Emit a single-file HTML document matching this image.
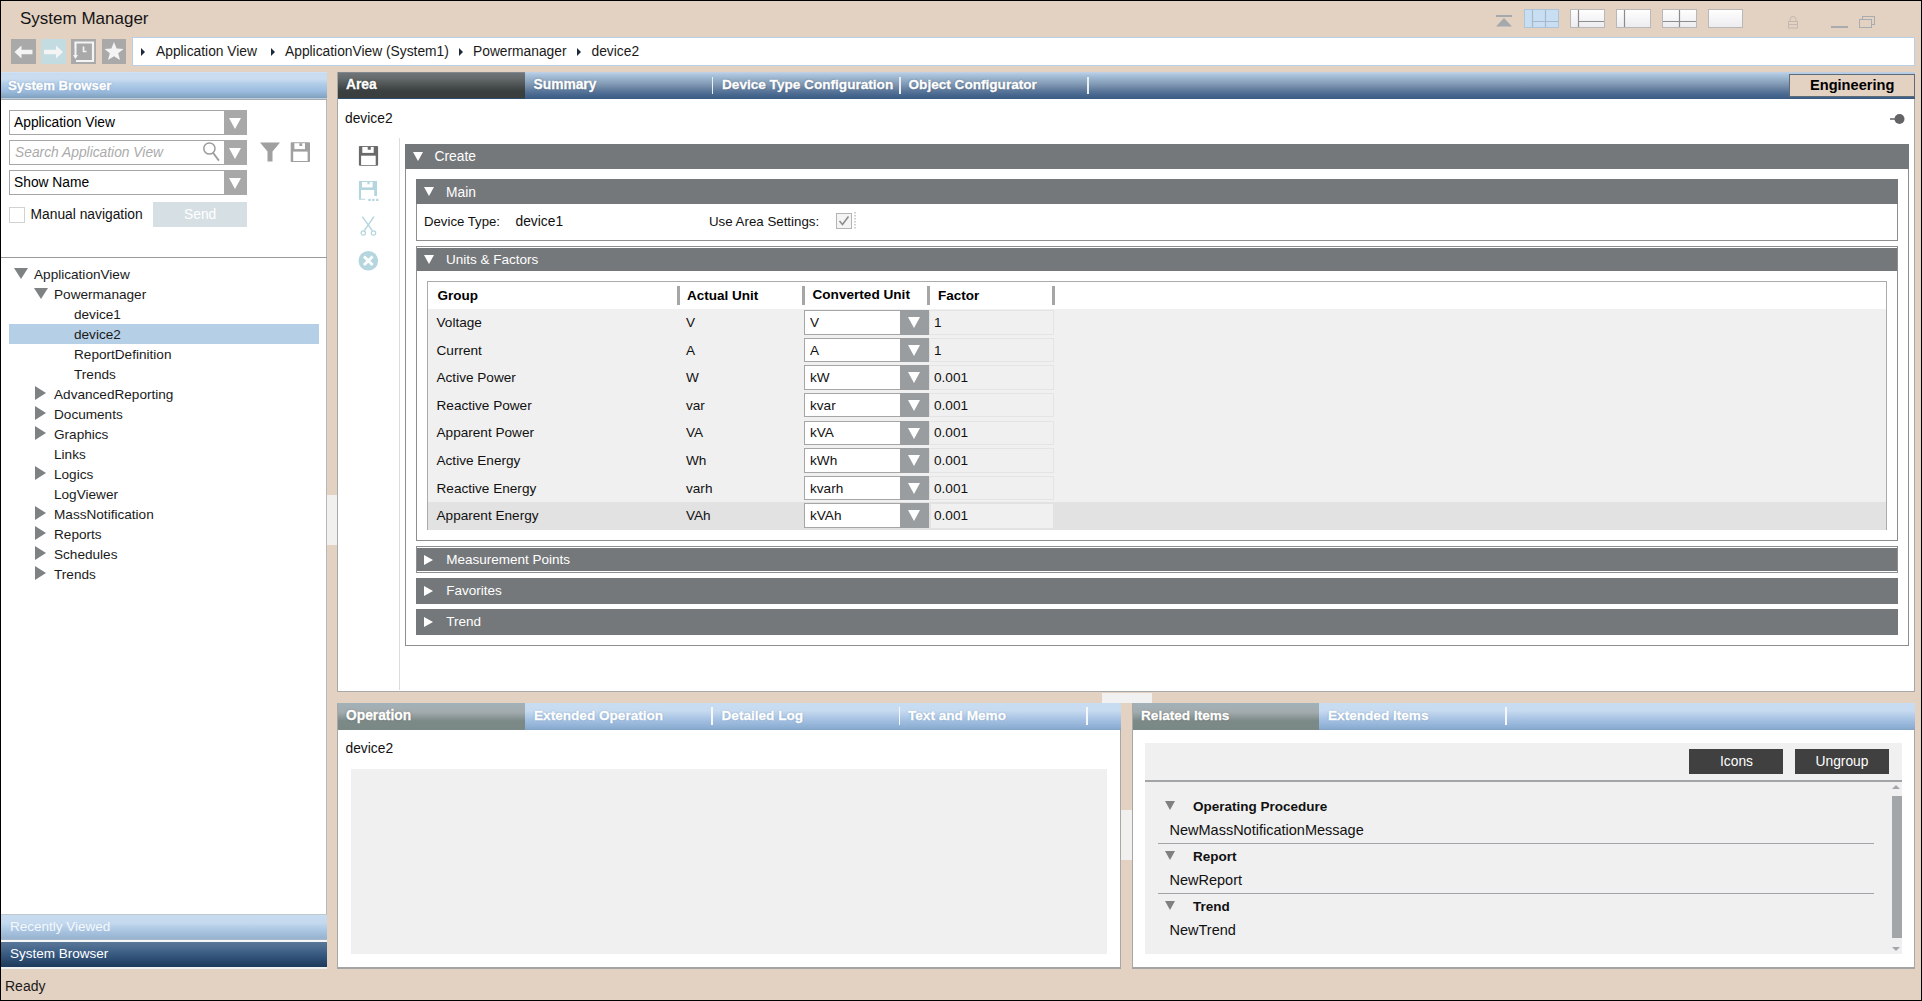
<!DOCTYPE html>
<html><head><meta charset="utf-8">
<style>
*{box-sizing:border-box;margin:0;padding:0}
html,body{width:1922px;height:1001px;overflow:hidden}
body{position:relative;background:#E3D1C2;font-family:"Liberation Sans",sans-serif;font-size:13.5px;color:#000}
.a{position:absolute}
.t{position:absolute;white-space:nowrap;line-height:1}
.sh{text-shadow:0 0 1px rgba(0,0,0,.35)}
.bw{-webkit-text-stroke:0.35px #fff}
</style></head><body>
<div class="a" style="left:0px;top:0px;width:1922px;height:1px;background:#000"></div>
<div class="a" style="left:0px;top:1000px;width:1922px;height:1px;background:#000"></div>
<div class="a" style="left:0px;top:0px;width:1px;height:1001px;background:#000"></div>
<div class="a" style="left:1921px;top:0px;width:1px;height:1001px;background:#000"></div>
<div class="t" style="left:20px;top:9.61px;font-size:17px;color:#151515;">System Manager</div>
<div class="a" style="left:11px;top:39px;width:25px;height:25px;background:#A9A9A9"></div>
<div class="a" style="left:41px;top:39px;width:25px;height:25px;background:#C2DCE2"></div>
<div class="a" style="left:71px;top:39px;width:25px;height:25px;background:#A9A9A9"></div>
<div class="a" style="left:102px;top:39px;width:24px;height:25px;background:#A9A9A9"></div>
<svg class="a" style="left:11px;top:39px" width="25" height="25" viewBox="0 0 25 25"><path d="M3.5 13 L10.5 6.5 L10.5 10.7 L21.5 10.7 L21.5 15.3 L10.5 15.3 L10.5 19.5 Z" fill="#F4F4F4"/></svg>
<svg class="a" style="left:41px;top:39px" width="25" height="25" viewBox="0 0 25 25"><path d="M22 13 L15 6.5 L15 10.7 L3 10.7 L3 15.3 L15 15.3 L15 19.5 Z" fill="#F4F4F4"/></svg>
<svg class="a" style="left:71px;top:39px" width="25" height="25" viewBox="0 0 25 25"><path d="M4.5 9 V3.5 H22 V22 H5" fill="none" stroke="#F4F4F4" stroke-width="2.2"/><path d="M2 16 L7 16 L4.5 20 Z" fill="#F4F4F4"/><path d="M4.5 9 V17" stroke="#F4F4F4" stroke-width="2"/><path d="M12.5 7.5 V12.5 H15.5" fill="none" stroke="#F4F4F4" stroke-width="1.6"/></svg>
<svg class="a" style="left:102px;top:39px" width="24" height="25" viewBox="0 0 24 25"><path d="M12 3 L14.6 9.6 L21.5 9.9 L16.2 14.3 L18 21 L12 17.2 L6 21 L7.8 14.3 L2.5 9.9 L9.4 9.6 Z" fill="#F4F4F4"/></svg>
<div class="a" style="left:132px;top:37px;width:1783px;height:28.5px;background:#fff;border:1px solid #B9CFE6"></div>
<div class="a" style="left:141px;top:47.5px;width:0;height:0;border-top:4.0px solid transparent;border-bottom:4.0px solid transparent;border-left:4.5px solid #1E2A3A"></div>
<div class="a" style="left:271px;top:47.5px;width:0;height:0;border-top:4.0px solid transparent;border-bottom:4.0px solid transparent;border-left:4.5px solid #1E2A3A"></div>
<div class="a" style="left:458.5px;top:47.5px;width:0;height:0;border-top:4.0px solid transparent;border-bottom:4.0px solid transparent;border-left:4.5px solid #1E2A3A"></div>
<div class="a" style="left:576.5px;top:47.5px;width:0;height:0;border-top:4.0px solid transparent;border-bottom:4.0px solid transparent;border-left:4.5px solid #1E2A3A"></div>
<div class="t" style="left:156px;top:44.82px;font-size:13.8px;color:#1A1A1A;">Application View</div>
<div class="t" style="left:285px;top:44.82px;font-size:13.8px;color:#1A1A1A;">ApplicationView (System1)</div>
<div class="t" style="left:473px;top:44.82px;font-size:13.8px;color:#1A1A1A;">Powermanager</div>
<div class="t" style="left:591.5px;top:44.82px;font-size:13.8px;color:#1A1A1A;">device2</div>
<svg class="a" style="left:1495px;top:14px" width="18" height="14" viewBox="0 0 18 14"><rect x="1" y="1" width="16" height="2" fill="#A4A9AD"/><path d="M9 4 L17 12.5 L1 12.5 Z" fill="#A4A9AD"/></svg>
<svg class="a" style="left:1523.5px;top:9px" width="35" height="19" viewBox="0 0 35 19"><defs><linearGradient id="g1523" x1="0" y1="0" x2="0" y2="1"><stop offset="0" stop-color="#FFFFFF"/><stop offset="1" stop-color="#ECECF0"/></linearGradient></defs><rect x="0.5" y="0.5" width="34" height="18" fill="#C8DEF2" stroke="#B0C4D8"/><path d="M8.5 1 V18 M21.5 1 V18 M8.5 12.5 H34" stroke="#A8B8C8" stroke-width="1.2"/></svg>
<svg class="a" style="left:1569.5px;top:9px" width="35" height="19" viewBox="0 0 35 19"><defs><linearGradient id="g1569" x1="0" y1="0" x2="0" y2="1"><stop offset="0" stop-color="#FFFFFF"/><stop offset="1" stop-color="#ECECF0"/></linearGradient></defs><rect x="0.5" y="0.5" width="34" height="18" fill="url(#g1569)" stroke="#B8B8B8"/><path d="M8.5 1 V18 M8.5 12.5 H34" stroke="#8C8C8C" stroke-width="1.2"/></svg>
<svg class="a" style="left:1615.5px;top:9px" width="35" height="19" viewBox="0 0 35 19"><defs><linearGradient id="g1615" x1="0" y1="0" x2="0" y2="1"><stop offset="0" stop-color="#FFFFFF"/><stop offset="1" stop-color="#ECECF0"/></linearGradient></defs><rect x="0.5" y="0.5" width="34" height="18" fill="url(#g1615)" stroke="#B8B8B8"/><path d="M8.5 1 V18" stroke="#8C8C8C" stroke-width="1.2"/></svg>
<svg class="a" style="left:1661.5px;top:9px" width="35" height="19" viewBox="0 0 35 19"><defs><linearGradient id="g1661" x1="0" y1="0" x2="0" y2="1"><stop offset="0" stop-color="#FFFFFF"/><stop offset="1" stop-color="#ECECF0"/></linearGradient></defs><rect x="0.5" y="0.5" width="34" height="18" fill="url(#g1661)" stroke="#B8B8B8"/><path d="M17.5 1 V18 M1 12.5 H34" stroke="#8C8C8C" stroke-width="1.2"/></svg>
<svg class="a" style="left:1707.5px;top:9px" width="35" height="19" viewBox="0 0 35 19"><defs><linearGradient id="g1707" x1="0" y1="0" x2="0" y2="1"><stop offset="0" stop-color="#FFFFFF"/><stop offset="1" stop-color="#ECECF0"/></linearGradient></defs><rect x="0.5" y="0.5" width="34" height="18" fill="url(#g1707)" stroke="#B8B8B8"/></svg>
<svg class="a" style="left:1787px;top:15px" width="12" height="14" viewBox="0 0 12 14"><path d="M3 6.5 V4.5 A3 3 0 0 1 9 4.5 V6.5" fill="none" stroke="#C4B8B0" stroke-width="1"/><rect x="1.5" y="6.5" width="9" height="6.5" fill="none" stroke="#C4B8B0" stroke-width="1"/><path d="M1.5 9.5 H10.5" stroke="#C4B8B0"/></svg>
<div class="a" style="left:1831px;top:26px;width:17px;height:1.5px;background:#A9ACAE"></div>
<svg class="a" style="left:1858px;top:15px" width="18" height="14" viewBox="0 0 18 14"><rect x="4.5" y="1.5" width="12" height="8" fill="none" stroke="#A9ACAE"/><rect x="1.5" y="4.5" width="12" height="8" fill="#E3D1C2" stroke="#A9ACAE"/></svg>
<div class="a" style="left:1px;top:72px;width:326px;height:26px;background:linear-gradient(#D8E6F4 0px,#C8DCF1 1px,#CADDF0 7px,#B0CCE8 12px,#9CBCE0 19px,#88A9C6 24px,#7F9EBD 26px)"></div>
<div class="a" style="left:1px;top:98px;width:326px;height:1px;background:#BFCDE0"></div>
<div class="a" style="left:1px;top:99px;width:326px;height:1px;background:#A4ACAE"></div>
<div class="t" style="left:8px;top:78.83px;font-size:13.2px;font-weight:bold;color:#FFFFFF;-webkit-text-stroke:0.35px #fff;text-shadow:0 0 1.5px #5A7FA8">System Browser</div>
<div class="a" style="left:1px;top:100px;width:326px;height:815px;background:#fff;border-right:1px solid #B8B8B8"></div>
<div class="a" style="left:9px;top:110px;width:238px;height:25px;background:#fff;border:1px solid #A6A6A6"></div>
<div class="a" style="left:224px;top:110px;width:23px;height:25px;background:#A8A8A8"></div>
<div class="a" style="left:228.8px;top:118.2px;width:0;height:0;border-left:6.1px solid transparent;border-right:6.1px solid transparent;border-top:11px solid #FFFFFF"></div>
<div class="t" style="left:14px;top:115.82px;font-size:13.8px;color:#000;">Application View</div>
<div class="a" style="left:9px;top:140px;width:238px;height:25px;background:#fff;border:1px solid #A6A6A6"></div>
<div class="a" style="left:224px;top:140px;width:23px;height:25px;background:#A8A8A8"></div>
<div class="a" style="left:228.8px;top:148.2px;width:0;height:0;border-left:6.1px solid transparent;border-right:6.1px solid transparent;border-top:11px solid #FFFFFF"></div>
<div class="t" style="left:15px;top:145.82px;font-size:13.8px;color:#ABABAB;font-style:italic;">Search Application View</div>
<svg class="a" style="left:200px;top:141px" width="22" height="22" viewBox="0 0 22 22"><circle cx="9.4" cy="7.5" r="5.6" fill="none" stroke="#9C9C9C" stroke-width="1.5"/><path d="M13 11.8 L18.9 19.6" stroke="#9C9C9C" stroke-width="1.8"/></svg>
<div class="a" style="left:9px;top:170px;width:238px;height:25px;background:#fff;border:1px solid #A6A6A6"></div>
<div class="a" style="left:224px;top:170px;width:23px;height:25px;background:#A8A8A8"></div>
<div class="a" style="left:228.8px;top:178.2px;width:0;height:0;border-left:6.1px solid transparent;border-right:6.1px solid transparent;border-top:11px solid #FFFFFF"></div>
<div class="t" style="left:14px;top:175.82px;font-size:13.8px;color:#000;">Show Name</div>
<svg class="a" style="left:259px;top:141px" width="22" height="22" viewBox="0 0 22 22"><path d="M1 1.5 H21 L13.5 10.5 V20.5 H8.5 V10.5 Z" fill="#A0A0A0"/></svg>
<svg class="a" style="left:289px;top:141px" width="22" height="22" viewBox="0 0 22 22"><rect x="1.7" y="1.2" width="19.3" height="19.8" rx="0.8" fill="#A0A0A0"/><rect x="5.4" y="2.2" width="10.6" height="5.9" fill="#fff"/><rect x="10.4" y="2.2" width="2.8" height="2.8" fill="#A0A0A0"/><rect x="4.2" y="10.6" width="14.4" height="9.4" fill="#fff"/></svg>
<div class="a" style="left:9px;top:207px;width:16px;height:15.5px;background:#fff;border:1px solid #D2D2D2"></div>
<div class="t" style="left:30.6px;top:208.32px;font-size:13.8px;color:#111;">Manual navigation</div>
<div class="a" style="left:153px;top:202px;width:94px;height:25px;background:#D6E0E4"></div>
<div class="t" style="left:184px;top:208.32px;font-size:13.8px;color:#FFFFFF;">Send</div>
<div class="a" style="left:1px;top:257px;width:326px;height:1px;background:#9A9A9A"></div>
<div class="a" style="left:13.7px;top:268px;width:0;height:0;border-left:7.0px solid transparent;border-right:7.0px solid transparent;border-top:11.5px solid #7F8283"></div>
<div class="t" style="left:34px;top:268.49px;font-size:13.6px;color:#1A1A1A;">ApplicationView</div>
<div class="a" style="left:33.7px;top:288px;width:0;height:0;border-left:7.0px solid transparent;border-right:7.0px solid transparent;border-top:11.5px solid #7F8283"></div>
<div class="t" style="left:54px;top:288.49px;font-size:13.6px;color:#1A1A1A;">Powermanager</div>
<div class="t" style="left:74px;top:308.49px;font-size:13.6px;color:#1A1A1A;">device1</div>
<div class="a" style="left:9px;top:324px;width:310px;height:20px;background:#B5D0E6"></div>
<div class="t" style="left:74px;top:328.49px;font-size:13.6px;color:#1A1A1A;">device2</div>
<div class="t" style="left:74px;top:348.49px;font-size:13.6px;color:#1A1A1A;">ReportDefinition</div>
<div class="t" style="left:74px;top:368.49px;font-size:13.6px;color:#1A1A1A;">Trends</div>
<div class="a" style="left:35px;top:385.5px;width:0;height:0;border-top:7.0px solid transparent;border-bottom:7.0px solid transparent;border-left:11.5px solid #7F8283"></div>
<div class="t" style="left:54px;top:388.49px;font-size:13.6px;color:#1A1A1A;">AdvancedReporting</div>
<div class="a" style="left:35px;top:405.5px;width:0;height:0;border-top:7.0px solid transparent;border-bottom:7.0px solid transparent;border-left:11.5px solid #7F8283"></div>
<div class="t" style="left:54px;top:408.49px;font-size:13.6px;color:#1A1A1A;">Documents</div>
<div class="a" style="left:35px;top:425.5px;width:0;height:0;border-top:7.0px solid transparent;border-bottom:7.0px solid transparent;border-left:11.5px solid #7F8283"></div>
<div class="t" style="left:54px;top:428.49px;font-size:13.6px;color:#1A1A1A;">Graphics</div>
<div class="t" style="left:54px;top:448.49px;font-size:13.6px;color:#1A1A1A;">Links</div>
<div class="a" style="left:35px;top:465.5px;width:0;height:0;border-top:7.0px solid transparent;border-bottom:7.0px solid transparent;border-left:11.5px solid #7F8283"></div>
<div class="t" style="left:54px;top:468.49px;font-size:13.6px;color:#1A1A1A;">Logics</div>
<div class="t" style="left:54px;top:488.49px;font-size:13.6px;color:#1A1A1A;">LogViewer</div>
<div class="a" style="left:35px;top:505.5px;width:0;height:0;border-top:7.0px solid transparent;border-bottom:7.0px solid transparent;border-left:11.5px solid #7F8283"></div>
<div class="t" style="left:54px;top:508.49px;font-size:13.6px;color:#1A1A1A;">MassNotification</div>
<div class="a" style="left:35px;top:525.5px;width:0;height:0;border-top:7.0px solid transparent;border-bottom:7.0px solid transparent;border-left:11.5px solid #7F8283"></div>
<div class="t" style="left:54px;top:528.49px;font-size:13.6px;color:#1A1A1A;">Reports</div>
<div class="a" style="left:35px;top:545.5px;width:0;height:0;border-top:7.0px solid transparent;border-bottom:7.0px solid transparent;border-left:11.5px solid #7F8283"></div>
<div class="t" style="left:54px;top:548.49px;font-size:13.6px;color:#1A1A1A;">Schedules</div>
<div class="a" style="left:35px;top:565.5px;width:0;height:0;border-top:7.0px solid transparent;border-bottom:7.0px solid transparent;border-left:11.5px solid #7F8283"></div>
<div class="t" style="left:54px;top:568.49px;font-size:13.6px;color:#1A1A1A;">Trends</div>
<div class="a" style="left:327px;top:495px;width:10px;height:50px;background:#F2F0EE"></div>
<div class="a" style="left:1px;top:914.4px;width:326px;height:1px;background:#C0C8D0"></div>
<div class="a" style="left:1px;top:915.4px;width:326px;height:24px;background:linear-gradient(#C8DCF0 0px,#C4D9EE 8px,#A8C4E0 16px,#98B4D0 23px)"></div>
<div class="a" style="left:1px;top:939px;width:326px;height:1px;background:#A8B8C8"></div>
<div class="t" style="left:10px;top:919.57px;font-size:13.5px;color:#F4F8FC;">Recently Viewed</div>
<div class="a" style="left:1px;top:940px;width:326px;height:2px;background:#F4F6F8"></div>
<div class="a" style="left:1px;top:942px;width:326px;height:24.5px;background:linear-gradient(#5A7898 0px,#4A6A8E 6px,#34557C 14px,#203C5C 24px)"></div>
<div class="t" style="left:10px;top:946.57px;font-size:13.5px;color:#FFFFFF;">System Browser</div>
<div class="a" style="left:1px;top:966.5px;width:326px;height:2px;background:#EEF0F2"></div>
<div class="t" style="left:5px;top:979.15px;font-size:14px;color:#1A1A1A;">Ready</div>
<div class="a" style="left:337px;top:72px;width:578px;height:0px;"></div>
<div class="a" style="left:337px;top:72px;width:1578px;height:620px;background:#fff;border:1px solid #A8A8A8;border-top:none"></div>
<div class="a" style="left:338px;top:72px;width:1577px;height:27px;background:linear-gradient(#C2D2E6 0px,#AAC2DC 3px,#94ADC6 8px,#7890AC 14px,#5A769A 19px,#42638B 24px,#3F5F86 26px,#355880 27px)"></div>
<div class="a" style="left:338px;top:72px;width:186.5px;height:26px;background:linear-gradient(#8C9399 0px,#6E7477 1.5px,#666C6D 6px,#4A5050 14px,#3A3F3F 19px,#3C3D3D 26px)"></div>
<div class="a" style="left:338px;top:98px;width:186.5px;height:1px;background:#2F4D6E"></div>
<div class="t" style="left:346px;top:77.82px;font-size:13.8px;font-weight:bold;color:#FFFFFF;-webkit-text-stroke:0.35px #fff;text-shadow:0 0 1.5px #000">Area</div>
<div class="t" style="left:533.5px;top:77.82px;font-size:13.8px;font-weight:bold;color:#FFFFFF;-webkit-text-stroke:0.35px #fff;text-shadow:0 0 1.5px #2A4060">Summary</div>
<div class="t" style="left:722px;top:77.99px;font-size:13.6px;font-weight:bold;color:#FFFFFF;-webkit-text-stroke:0.35px #fff;text-shadow:0 0 1.5px #2A4060">Device Type Configuration</div>
<div class="t" style="left:908.5px;top:77.99px;font-size:13.6px;font-weight:bold;color:#FFFFFF;-webkit-text-stroke:0.35px #fff;text-shadow:0 0 1.5px #2A4060">Object Configurator</div>
<div class="a" style="left:711.5px;top:77px;width:1.5px;height:17px;background:#E8EEF4"></div>
<div class="a" style="left:899px;top:77px;width:1.5px;height:17px;background:#E8EEF4"></div>
<div class="a" style="left:1087px;top:77px;width:1.5px;height:17px;background:#E8EEF4"></div>
<div class="a" style="left:1789px;top:74px;width:126px;height:23px;background:#E3D1C2;border:1px solid #5E6B78"></div>
<div class="t" style="left:1810px;top:78.14px;font-size:14.6px;font-weight:bold;color:#000;">Engineering</div>
<div class="t" style="left:345px;top:112.32px;font-size:13.8px;color:#111;">device2</div>
<svg class="a" style="left:1888px;top:112px" width="20" height="14" viewBox="0 0 20 14"><path d="M2 7 H8" stroke="#555" stroke-width="1.4"/><circle cx="11.5" cy="7" r="5" fill="#626466"/></svg>
<div class="a" style="left:399px;top:138px;width:1px;height:552px;background:#DCDCDC"></div>
<svg class="a" style="left:357px;top:145px" width="22" height="22" viewBox="0 0 22 22"><rect x="1.9" y="0.9" width="19.2" height="19.9" rx="1" fill="#6A6A6A"/><rect x="5.3" y="1.9" width="11.4" height="6" fill="#fff"/><rect x="10.7" y="1.9" width="3.1" height="2.8" fill="#6A6A6A"/><rect x="4.1" y="10.7" width="14.6" height="9.3" fill="#fff"/></svg>
<svg class="a" style="left:357px;top:180px" width="24" height="24" viewBox="0 0 24 24"><path d="M1.9 1.1 H20 V16 H17.2 V9.9 H4 V18.8 H8.2 V19.8 H1.9 Z" fill="#B5D6DE"/><rect x="5" y="2" width="10.6" height="5.4" fill="#fff"/><rect x="10.4" y="2" width="2.3" height="2.3" fill="#B5D6DE"/><rect x="11.3" y="18.8" width="2.5" height="2.2" fill="#B5D6DE"/><rect x="15.2" y="18.8" width="2.3" height="2.2" fill="#B5D6DE"/><rect x="19.1" y="18.8" width="2.3" height="2.2" fill="#B5D6DE"/></svg>
<svg class="a" style="left:357px;top:215px" width="22" height="22" viewBox="0 0 22 22"><path d="M5.3 1.6 L15.3 15.6 M17 1.6 L7.3 15.6" stroke="#B5D6DE" stroke-width="1.5"/><circle cx="6.3" cy="18" r="2.2" fill="none" stroke="#B5D6DE" stroke-width="1.2"/><circle cx="16.5" cy="18" r="2.2" fill="none" stroke="#B5D6DE" stroke-width="1.2"/></svg>
<svg class="a" style="left:357px;top:250px" width="22" height="22" viewBox="0 0 22 22"><circle cx="11.3" cy="10.8" r="9.8" fill="#B5D6DE"/><path d="M7 6.5 L15.6 15.1 M15.6 6.5 L7 15.1" stroke="#fff" stroke-width="2.8"/></svg>
<div class="a" style="left:405px;top:168px;width:1504px;height:478px;border:1px solid #8E8E8E;border-top:none;background:#fff"></div>
<div class="a" style="left:405px;top:144.2px;width:1504px;height:24.4px;background:#75787B"></div>
<div class="a" style="left:413px;top:152px;width:0;height:0;border-left:5.0px solid transparent;border-right:5.0px solid transparent;border-top:9px solid #fff"></div>
<div class="t" style="left:434.5px;top:150.32px;font-size:13.8px;color:#FFFFFF;">Create</div>
<div class="a" style="left:416px;top:204px;width:1482px;height:37px;border:1px solid #8E8E8E;border-top:none"></div>
<div class="a" style="left:416px;top:179px;width:1482px;height:25px;background:#75787B"></div>
<div class="a" style="left:424px;top:187px;width:0;height:0;border-left:5.0px solid transparent;border-right:5.0px solid transparent;border-top:9px solid #fff"></div>
<div class="t" style="left:446px;top:185.82px;font-size:13.8px;color:#FFFFFF;">Main</div>
<div class="t" style="left:424px;top:214.83px;font-size:13.2px;color:#111;">Device Type:</div>
<div class="t" style="left:515.5px;top:215.32px;font-size:13.8px;color:#111;">device1</div>
<div class="t" style="left:709px;top:214.74px;font-size:13.3px;color:#111;">Use Area Settings:</div>
<div class="a" style="left:835.5px;top:212.5px;width:16px;height:16px;background:#F4F4F4;border:1px solid #B4B4B4"></div>
<svg class="a" style="left:835.5px;top:212.5px" width="16" height="16" viewBox="0 0 16 16"><path d="M3.5 8 L6.5 11.5 L12.5 3.5" fill="none" stroke="#8C8C8C" stroke-width="1.6"/></svg>
<svg class="a" style="left:853px;top:211px" width="4" height="19" viewBox="0 0 4 19"><path d="M2 1 V18" stroke="#A0A0A0" stroke-width="1" stroke-dasharray="1.5 1.5"/></svg>
<div class="a" style="left:416px;top:246px;width:1482px;height:295px;border:1px solid #8E8E8E"></div>
<div class="a" style="left:417px;top:247.8px;width:1480px;height:22.8px;background:#75787B"></div>
<div class="a" style="left:424px;top:255px;width:0;height:0;border-left:5.0px solid transparent;border-right:5.0px solid transparent;border-top:9px solid #fff"></div>
<div class="t" style="left:446px;top:253.07px;font-size:13.5px;color:#FFFFFF;">Units &amp; Factors</div>
<div class="a" style="left:427px;top:281px;width:1460px;height:249px;border:1px solid #ABABAB;background:#fff"></div>
<div class="a" style="left:677px;top:286px;width:3px;height:19px;background:#A6A6A6"></div>
<div class="a" style="left:802px;top:286px;width:3px;height:19px;background:#A6A6A6"></div>
<div class="a" style="left:927px;top:286px;width:3px;height:19px;background:#A6A6A6"></div>
<div class="a" style="left:1052px;top:286px;width:3px;height:19px;background:#A6A6A6"></div>
<div class="t" style="left:437.5px;top:288.57px;font-size:13.5px;font-weight:bold;color:#000;">Group</div>
<div class="t" style="left:687px;top:288.57px;font-size:13.5px;font-weight:bold;color:#000;">Actual Unit</div>
<div class="t" style="left:812.5px;top:288.49px;font-size:13.6px;font-weight:bold;color:#000;">Converted Unit</div>
<div class="t" style="left:938px;top:288.57px;font-size:13.5px;font-weight:bold;color:#000;">Factor</div>
<div class="a" style="left:428px;top:309.0px;width:1458px;height:27.6px;background:#F0F0F0"></div>
<div class="t" style="left:436.5px;top:315.99px;font-size:13.6px;color:#111;">Voltage</div>
<div class="t" style="left:686px;top:315.99px;font-size:13.6px;color:#111;">V</div>
<div class="a" style="left:804px;top:310.2px;width:125px;height:24.4px;background:#fff;border:1px solid #A6A6A6"></div>
<div class="a" style="left:900px;top:310.2px;width:29px;height:24.4px;background:#999DA0"></div>
<div class="a" style="left:908px;top:317.1px;width:0;height:0;border-left:6.5px solid transparent;border-right:6.5px solid transparent;border-top:11px solid #fff"></div>
<div class="t" style="left:810px;top:315.99px;font-size:13.6px;color:#111;">V</div>
<div class="a" style="left:929px;top:310.2px;width:125px;height:24.4px;background:#F0F0F0;border:1px solid #E4E4E4"></div>
<div class="t" style="left:934px;top:315.99px;font-size:13.6px;color:#111;">1</div>
<div class="a" style="left:428px;top:336.6px;width:1458px;height:27.6px;background:#F0F0F0"></div>
<div class="t" style="left:436.5px;top:343.59px;font-size:13.6px;color:#111;">Current</div>
<div class="t" style="left:686px;top:343.59px;font-size:13.6px;color:#111;">A</div>
<div class="a" style="left:804px;top:337.8px;width:125px;height:24.4px;background:#fff;border:1px solid #A6A6A6"></div>
<div class="a" style="left:900px;top:337.8px;width:29px;height:24.4px;background:#999DA0"></div>
<div class="a" style="left:908px;top:344.70000000000005px;width:0;height:0;border-left:6.5px solid transparent;border-right:6.5px solid transparent;border-top:11px solid #fff"></div>
<div class="t" style="left:810px;top:343.59px;font-size:13.6px;color:#111;">A</div>
<div class="a" style="left:929px;top:337.8px;width:125px;height:24.4px;background:#F0F0F0;border:1px solid #E4E4E4"></div>
<div class="t" style="left:934px;top:343.59px;font-size:13.6px;color:#111;">1</div>
<div class="a" style="left:428px;top:364.2px;width:1458px;height:27.6px;background:#F0F0F0"></div>
<div class="t" style="left:436.5px;top:371.19px;font-size:13.6px;color:#111;">Active Power</div>
<div class="t" style="left:686px;top:371.19px;font-size:13.6px;color:#111;">W</div>
<div class="a" style="left:804px;top:365.4px;width:125px;height:24.4px;background:#fff;border:1px solid #A6A6A6"></div>
<div class="a" style="left:900px;top:365.4px;width:29px;height:24.4px;background:#999DA0"></div>
<div class="a" style="left:908px;top:372.3px;width:0;height:0;border-left:6.5px solid transparent;border-right:6.5px solid transparent;border-top:11px solid #fff"></div>
<div class="t" style="left:810px;top:371.19px;font-size:13.6px;color:#111;">kW</div>
<div class="a" style="left:929px;top:365.4px;width:125px;height:24.4px;background:#F0F0F0;border:1px solid #E4E4E4"></div>
<div class="t" style="left:934px;top:371.19px;font-size:13.6px;color:#111;">0.001</div>
<div class="a" style="left:428px;top:391.8px;width:1458px;height:27.6px;background:#F0F0F0"></div>
<div class="t" style="left:436.5px;top:398.79px;font-size:13.6px;color:#111;">Reactive Power</div>
<div class="t" style="left:686px;top:398.79px;font-size:13.6px;color:#111;">var</div>
<div class="a" style="left:804px;top:393.0px;width:125px;height:24.4px;background:#fff;border:1px solid #A6A6A6"></div>
<div class="a" style="left:900px;top:393.0px;width:29px;height:24.4px;background:#999DA0"></div>
<div class="a" style="left:908px;top:399.90000000000003px;width:0;height:0;border-left:6.5px solid transparent;border-right:6.5px solid transparent;border-top:11px solid #fff"></div>
<div class="t" style="left:810px;top:398.79px;font-size:13.6px;color:#111;">kvar</div>
<div class="a" style="left:929px;top:393.0px;width:125px;height:24.4px;background:#F0F0F0;border:1px solid #E4E4E4"></div>
<div class="t" style="left:934px;top:398.79px;font-size:13.6px;color:#111;">0.001</div>
<div class="a" style="left:428px;top:419.4px;width:1458px;height:27.6px;background:#F0F0F0"></div>
<div class="t" style="left:436.5px;top:426.39px;font-size:13.6px;color:#111;">Apparent Power</div>
<div class="t" style="left:686px;top:426.39px;font-size:13.6px;color:#111;">VA</div>
<div class="a" style="left:804px;top:420.59999999999997px;width:125px;height:24.4px;background:#fff;border:1px solid #A6A6A6"></div>
<div class="a" style="left:900px;top:420.59999999999997px;width:29px;height:24.4px;background:#999DA0"></div>
<div class="a" style="left:908px;top:427.5px;width:0;height:0;border-left:6.5px solid transparent;border-right:6.5px solid transparent;border-top:11px solid #fff"></div>
<div class="t" style="left:810px;top:426.39px;font-size:13.6px;color:#111;">kVA</div>
<div class="a" style="left:929px;top:420.59999999999997px;width:125px;height:24.4px;background:#F0F0F0;border:1px solid #E4E4E4"></div>
<div class="t" style="left:934px;top:426.39px;font-size:13.6px;color:#111;">0.001</div>
<div class="a" style="left:428px;top:447.0px;width:1458px;height:27.6px;background:#F0F0F0"></div>
<div class="t" style="left:436.5px;top:453.99px;font-size:13.6px;color:#111;">Active Energy</div>
<div class="t" style="left:686px;top:453.99px;font-size:13.6px;color:#111;">Wh</div>
<div class="a" style="left:804px;top:448.2px;width:125px;height:24.4px;background:#fff;border:1px solid #A6A6A6"></div>
<div class="a" style="left:900px;top:448.2px;width:29px;height:24.4px;background:#999DA0"></div>
<div class="a" style="left:908px;top:455.1px;width:0;height:0;border-left:6.5px solid transparent;border-right:6.5px solid transparent;border-top:11px solid #fff"></div>
<div class="t" style="left:810px;top:453.99px;font-size:13.6px;color:#111;">kWh</div>
<div class="a" style="left:929px;top:448.2px;width:125px;height:24.4px;background:#F0F0F0;border:1px solid #E4E4E4"></div>
<div class="t" style="left:934px;top:453.99px;font-size:13.6px;color:#111;">0.001</div>
<div class="a" style="left:428px;top:474.6px;width:1458px;height:27.6px;background:#F0F0F0"></div>
<div class="t" style="left:436.5px;top:481.59px;font-size:13.6px;color:#111;">Reactive Energy</div>
<div class="t" style="left:686px;top:481.59px;font-size:13.6px;color:#111;">varh</div>
<div class="a" style="left:804px;top:475.8px;width:125px;height:24.4px;background:#fff;border:1px solid #A6A6A6"></div>
<div class="a" style="left:900px;top:475.8px;width:29px;height:24.4px;background:#999DA0"></div>
<div class="a" style="left:908px;top:482.70000000000005px;width:0;height:0;border-left:6.5px solid transparent;border-right:6.5px solid transparent;border-top:11px solid #fff"></div>
<div class="t" style="left:810px;top:481.59px;font-size:13.6px;color:#111;">kvarh</div>
<div class="a" style="left:929px;top:475.8px;width:125px;height:24.4px;background:#F0F0F0;border:1px solid #E4E4E4"></div>
<div class="t" style="left:934px;top:481.59px;font-size:13.6px;color:#111;">0.001</div>
<div class="a" style="left:428px;top:502.20000000000005px;width:1458px;height:27.6px;background:#E2E2E2"></div>
<div class="t" style="left:436.5px;top:509.19px;font-size:13.6px;color:#111;">Apparent Energy</div>
<div class="t" style="left:686px;top:509.19px;font-size:13.6px;color:#111;">VAh</div>
<div class="a" style="left:804px;top:503.40000000000003px;width:125px;height:24.4px;background:#fff;border:1px solid #A6A6A6"></div>
<div class="a" style="left:900px;top:503.40000000000003px;width:29px;height:24.4px;background:#999DA0"></div>
<div class="a" style="left:908px;top:510.30000000000007px;width:0;height:0;border-left:6.5px solid transparent;border-right:6.5px solid transparent;border-top:11px solid #fff"></div>
<div class="t" style="left:810px;top:509.19px;font-size:13.6px;color:#111;">kVAh</div>
<div class="a" style="left:930.5px;top:504.00000000000006px;width:122px;height:23.8px;background:#F0F0F0"></div>
<div class="t" style="left:934px;top:509.19px;font-size:13.6px;color:#111;">0.001</div>
<div class="a" style="left:416px;top:546px;width:1482px;height:27px;border:1px solid #8E8E8E"></div>
<div class="a" style="left:417px;top:548px;width:1480px;height:22.6px;background:#75787B"></div>
<div class="a" style="left:424px;top:554.6px;width:0;height:0;border-top:5.25px solid transparent;border-bottom:5.25px solid transparent;border-left:9.5px solid #fff"></div>
<div class="t" style="left:446.3px;top:552.57px;font-size:13.5px;color:#FFFFFF;">Measurement Points</div>
<div class="a" style="left:416px;top:578px;width:1482px;height:25.5px;background:#75787B"></div>
<div class="a" style="left:424px;top:585.5px;width:0;height:0;border-top:5.25px solid transparent;border-bottom:5.25px solid transparent;border-left:9.5px solid #fff"></div>
<div class="t" style="left:446.3px;top:583.57px;font-size:13.5px;color:#FFFFFF;">Favorites</div>
<div class="a" style="left:416px;top:609px;width:1482px;height:26px;background:#75787B"></div>
<div class="a" style="left:424px;top:616.5px;width:0;height:0;border-top:5.25px solid transparent;border-bottom:5.25px solid transparent;border-left:9.5px solid #fff"></div>
<div class="t" style="left:446.3px;top:614.57px;font-size:13.5px;color:#FFFFFF;">Trend</div>
<div class="a" style="left:1102px;top:692.5px;width:50px;height:10px;background:#F1F1F1"></div>
<div class="a" style="left:337px;top:703px;width:784px;height:265.5px;background:#fff;border:1px solid #A8A8A8;border-top:none;border-bottom:2px solid #A4A4A4"></div>
<div class="a" style="left:338px;top:703px;width:783px;height:26.5px;background:linear-gradient(#C9DDF2 0px,#C6DAF0 8px,#A4C0E2 17px,#8EB0D4 24px,#86A6C8 26.5px)"></div>
<div class="a" style="left:338px;top:703px;width:186.5px;height:26.5px;background:linear-gradient(#A2B2B8 0px,#A3ABAE 9px,#7B8987 18px,#7A8886 26.5px)"></div>
<div class="t" style="left:346px;top:709.32px;font-size:13.8px;font-weight:bold;color:#FFFFFF;-webkit-text-stroke:0.35px #fff;text-shadow:0 0 1.5px #444">Operation</div>
<div class="t" style="left:534px;top:709.49px;font-size:13.6px;font-weight:bold;color:#FFFFFF;-webkit-text-stroke:0.35px #fff;text-shadow:0 0 1.5px #5A7FA8">Extended Operation</div>
<div class="t" style="left:721.5px;top:709.49px;font-size:13.6px;font-weight:bold;color:#FFFFFF;-webkit-text-stroke:0.35px #fff;text-shadow:0 0 1.5px #5A7FA8">Detailed Log</div>
<div class="t" style="left:908px;top:709.49px;font-size:13.6px;font-weight:bold;color:#FFFFFF;-webkit-text-stroke:0.35px #fff;text-shadow:0 0 1.5px #5A7FA8">Text and Memo</div>
<div class="a" style="left:711px;top:707px;width:1.5px;height:18px;background:#F4F8FC"></div>
<div class="a" style="left:898.5px;top:707px;width:1.5px;height:18px;background:#F4F8FC"></div>
<div class="a" style="left:1086px;top:707px;width:1.5px;height:18px;background:#F4F8FC"></div>
<div class="t" style="left:345.5px;top:742.02px;font-size:13.8px;color:#111;">device2</div>
<div class="a" style="left:351px;top:769px;width:756px;height:185px;background:#F0F0F0"></div>
<div class="a" style="left:1121px;top:810px;width:11px;height:50px;background:#F2F0EE"></div>
<div class="a" style="left:1132px;top:703px;width:783px;height:265.5px;background:#fff;border:1px solid #A8A8A8;border-top:none;border-bottom:2px solid #A4A4A4"></div>
<div class="a" style="left:1133px;top:703px;width:782px;height:26.5px;background:linear-gradient(#C9DDF2 0px,#C6DAF0 8px,#A4C0E2 17px,#8EB0D4 24px,#86A6C8 26.5px)"></div>
<div class="a" style="left:1133px;top:703px;width:186px;height:26.5px;background:linear-gradient(#A2B2B8 0px,#A3ABAE 9px,#7B8987 18px,#7A8886 26.5px)"></div>
<div class="t" style="left:1141px;top:709.49px;font-size:13.6px;font-weight:bold;color:#FFFFFF;-webkit-text-stroke:0.35px #fff;text-shadow:0 0 1.5px #444">Related Items</div>
<div class="t" style="left:1328px;top:709.49px;font-size:13.6px;font-weight:bold;color:#FFFFFF;-webkit-text-stroke:0.35px #fff;text-shadow:0 0 1.5px #5A7FA8">Extended Items</div>
<div class="a" style="left:1505px;top:707px;width:1.5px;height:18px;background:#F4F8FC"></div>
<div class="a" style="left:1145px;top:743px;width:757px;height:211px;background:#F0F0F0"></div>
<div class="a" style="left:1689px;top:749px;width:94px;height:25px;background:#404040"></div>
<div class="t" style="left:1720px;top:755.32px;font-size:13.8px;color:#FFFFFF;">Icons</div>
<div class="a" style="left:1795px;top:749px;width:94px;height:25px;background:#404040"></div>
<div class="t" style="left:1815.5px;top:755.32px;font-size:13.8px;color:#FFFFFF;">Ungroup</div>
<div class="a" style="left:1145px;top:780px;width:757px;height:2px;background:#A2A6A9"></div>
<div class="a" style="left:1892px;top:784.5px;width:0;height:0;border-left:4.5px solid transparent;border-right:4.5px solid transparent;border-bottom:4.5px solid #A2A6A9"></div>
<div class="a" style="left:1892px;top:796px;width:9.5px;height:142px;background:#A2A6A9"></div>
<div class="a" style="left:1892px;top:947px;width:0;height:0;border-left:4.5px solid transparent;border-right:4.5px solid transparent;border-top:4.5px solid #A2A6A9"></div>
<div class="a" style="left:1165px;top:801px;width:0;height:0;border-left:5.25px solid transparent;border-right:5.25px solid transparent;border-top:9.5px solid #808080"></div>
<div class="t" style="left:1193px;top:800.17px;font-size:13.5px;font-weight:bold;color:#111;">Operating Procedure</div>
<div class="t" style="left:1169.5px;top:822.73px;font-size:14.5px;color:#111;">NewMassNotificationMessage</div>
<div class="a" style="left:1158px;top:843px;width:716px;height:1px;background:#A0A4A7"></div>
<div class="a" style="left:1165px;top:851px;width:0;height:0;border-left:5.25px solid transparent;border-right:5.25px solid transparent;border-top:9.5px solid #808080"></div>
<div class="t" style="left:1193px;top:850.17px;font-size:13.5px;font-weight:bold;color:#111;">Report</div>
<div class="t" style="left:1169.5px;top:872.73px;font-size:14.5px;color:#111;">NewReport</div>
<div class="a" style="left:1158px;top:893px;width:716px;height:1px;background:#A0A4A7"></div>
<div class="a" style="left:1165px;top:901px;width:0;height:0;border-left:5.25px solid transparent;border-right:5.25px solid transparent;border-top:9.5px solid #808080"></div>
<div class="t" style="left:1193px;top:900.17px;font-size:13.5px;font-weight:bold;color:#111;">Trend</div>
<div class="t" style="left:1169.5px;top:922.73px;font-size:14.5px;color:#111;">NewTrend</div>
</body></html>
